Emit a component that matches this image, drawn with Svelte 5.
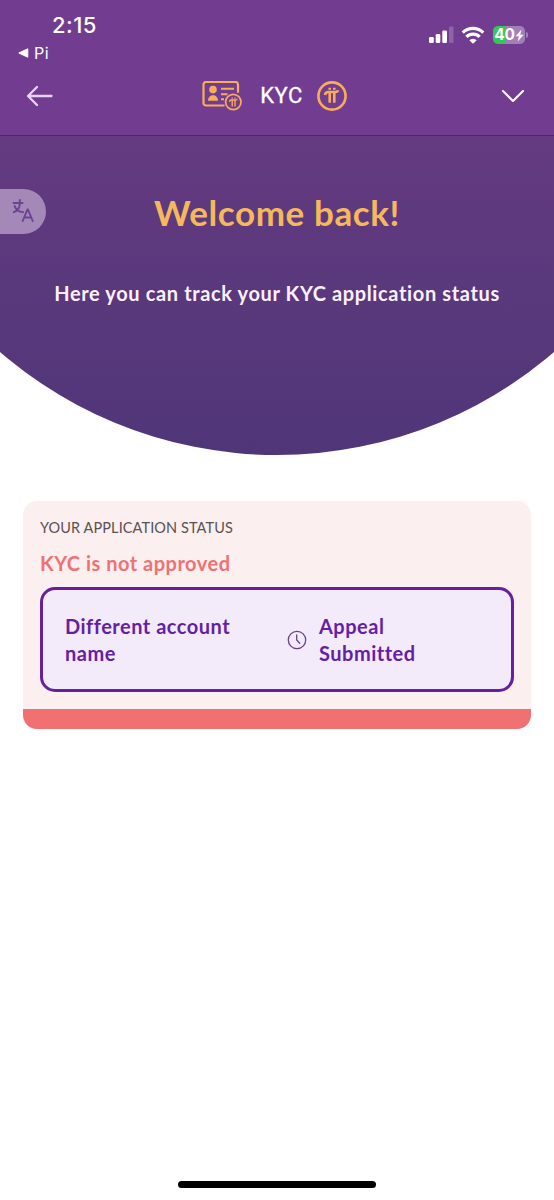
<script lang="ts">
	let title = 'KYC';
	let status = 'KYC is not approved';
	let steps = [{ reason: 'Different account name', state: 'Appeal Submitted' }];
</script>

{#snippet piMark()}
	<path d="M8 14c.3-2 1.300-3 3.300-3h7.200c1.400 0 2.200-.6 2.500-1.800M12.700 11v10.700M17.300 11v10.700" />
	<path d="M12.700 6.800v2M17.300 6.800v2" />
{/snippet}

<div class="screen">
	<header>
		<div class="status-bar">
			<div class="status-left">
				<div class="time">2:15</div>
				<div class="back-app">
					<svg width="11" height="10" viewBox="0 0 11 10"><path d="M.8 5 9.800.800v8.400z" fill="#fff" stroke="#fff" stroke-linejoin="round" /></svg>
					<span>Pi</span>
				</div>
			</div>
			<div class="status-right">
				<svg width="25" height="17" viewBox="0 0 25 17" fill="#fff">
					<rect x="0" y="11" width="4.800" height="6" rx="1.300" />
					<rect x="6.700" y="8" width="4.600" height="9" rx="1.300" />
					<rect x="13.300" y="4.500" width="4.700" height="12.500" rx="1.300" />
					<rect x="20" y="0.500" width="4.500" height="16.500" rx="1.300" opacity=".2" />
				</svg>
				<svg class="wifi" width="24" height="18" viewBox="0 0 24 18">
					<g fill="none" stroke="#fff" stroke-width="3.300">
						<path d="M1.700 6.600a14.700 14.700 0 0 1 20.600 0" />
						<path d="M5.400 10.900a9.300 9.300 0 0 1 13.200 0" />
					</g>
					<path d="M8.300 14.300a5.300 5.300 0 0 1 7.400 0L12 17.800z" fill="#fff" />
				</svg>
				<div class="battery">
					<span>40</span>
					<svg width="9" height="13" viewBox="0 0 9 13"><path d="M6.500.5.500 7.300h3.300L2.700 12.500 8.600 5.700H5.200z" fill="#fff" /></svg>
				</div>
			</div>
		</div>
		<nav>
			<button aria-label="Back">
				<svg width="28" height="22" viewBox="0 0 28 22" fill="none" stroke="#ead2f5" stroke-width="2.300" stroke-linecap="round" stroke-linejoin="round">
					<path d="M11 2 2 11l9 9M2.500 11H25.500" />
				</svg>
			</button>
			<div class="brand">
				<svg width="40" height="30" viewBox="0 0 40 30" fill="none" stroke="#f8ad59" stroke-width="2.200">
					<path d="M22.500 24.500H4A2.500 2.500 0 0 1 1.500 22V3.500A2.500 2.500 0 0 1 4 1h29.500A2.500 2.500 0 0 1 36 3.500v8.300" />
					<circle cx="11" cy="8.600" r="3.800" fill="#f8ad59" stroke="none" />
					<path d="M6 19.800c0-7.500 10-7.500 10 0z" fill="#f8ad59" stroke="none" />
					<path d="M19 7.800h13M19 13.300h6.500M19 18.300h3" stroke-width="2" />
					<circle cx="31.300" cy="21" r="7.700" stroke-width="1.700" />
					<g transform="translate(22.600 12.400) scale(.6)" stroke-width="2.300">{@render piMark()}</g>
				</svg>
				<h1>{title}</h1>
				<svg width="30" height="30" viewBox="0 0 30 30" fill="none" stroke="#f8ad59" stroke-width="2.600">
					<circle cx="15" cy="15" r="13.600" />
					{@render piMark()}
				</svg>
			</div>
			<button aria-label="Menu">
				<svg width="24" height="14" viewBox="0 0 24 14" fill="none" stroke="#fff" stroke-width="2.100" stroke-linecap="round" stroke-linejoin="round">
					<path d="M2 2l10 10L22 2" />
				</svg>
			</button>
		</nav>
	</header>

	<section class="hero">
		<h2>Welcome back!</h2>
		<p>Here you can track your KYC application status</p>
		<button class="translate" aria-label="Translate">
			<svg width="22" height="24" viewBox="0 0 22 24" fill="none" stroke="#6c4293" stroke-width="1.900" stroke-linecap="round" stroke-linejoin="round">
				<path d="M1.500 4H10.500M7.800 1v3.300c0 4.500-2.300 7.600-6 8.900M2.600 7c1.200 3.600 4.200 5.800 8.500 6.100" />
				<path d="M10.700 22l4.700-11.500h.6L20.700 22M12.500 18.500h6.400" />
			</svg>
		</button>
	</section>

	<main>
		<div class="card">
			<div class="label">Your application status</div>
			<div class="status">{status}</div>
			{#each steps as step}
				<div class="step">
					<div class="reason">{step.reason}</div>
					<svg width="20" height="20" viewBox="0 0 20 20" fill="none" stroke="#6b4087" stroke-width="1.300" stroke-linecap="round">
						<circle cx="10" cy="10" r="8.700" />
						<path d="M9.700 5v5l3 3.200" />
					</svg>
					<div class="state">{step.state}</div>
				</div>
			{/each}
		</div>
	</main>

	<div class="home-indicator"></div>
</div>

<style>
	:global(body) {
		background: #fff;
	}

	.screen {
		width: 554px;
		height: 1200px;
		display: flex;
		flex-direction: column;
		overflow: hidden;
		background: #fff;
		font-family: Lato, 'Open Sans', sans-serif;
	}

	button {
		display: flex;
		padding: 0;
		border: 0;
		background: none;
	}

	svg {
		display: block;
		flex-shrink: 0;
	}

	h1, h2, p {
		margin: 0;
	}

	header {
		box-sizing: border-box;
		height: 136px;
		border-bottom: 1px solid #4e2768;
		background: #723d91;
		color: #fff;
		font-family: Inter, Roboto, sans-serif;
	}

	.status-bar {
		height: 68px;
		display: flex;
		justify-content: space-between;
	}

	.time {
		padding: 12px 0 0 52px;
		font-size: 22px;
		font-weight: 500;
		line-height: 27px;
		letter-spacing: 0.5px;
	}

	.back-app {
		display: flex;
		align-items: center;
		gap: 5px;
		padding: 4px 0 0 18px;
		font-size: 16px;
		line-height: 20px;
		letter-spacing: 0.5px;
	}

	.status-right {
		display: flex;
		align-items: flex-start;
		padding: 26px 29px 0 0;
	}

	.wifi {
		margin: 0 8px 0 7px;
	}

	.battery {
		position: relative;
		box-sizing: border-box;
		width: 32px;
		height: 18px;
		display: flex;
		align-items: center;
		justify-content: center;
		border-radius: 5px;
		background: linear-gradient(to right, #34c759 42%, #a27fb8 42%);
		font-size: 15.5px;
		font-weight: 700;
		line-height: 18px;
		letter-spacing: -0.3px;
	}

	.battery::after {
		content: '';
		position: absolute;
		right: -3px;
		top: 6px;
		width: 2px;
		height: 6px;
		border-radius: 0 2px 2px 0;
		background: #a27fb8;
	}

	nav {
		height: 55px;
		display: flex;
		align-items: center;
		justify-content: space-between;
		padding: 0 29px 0 26px;
	}

	.brand {
		display: flex;
		align-items: center;
		margin-right: 6px;
	}

	h1 {
		margin: 0 14px 0 18px;
		font: 400 22px/30px Roboto, sans-serif;
		letter-spacing: 0.5px;
		-webkit-text-stroke: 0.3px #fff;
	}

	.hero {
		position: relative;
		height: 319px;
		flex-shrink: 0;
		background: linear-gradient(#643a80, #4f3678);
		clip-path: circle(424px at 50% -105px);
		text-align: center;
		white-space: nowrap;
	}

	h2 {
		padding-top: 54px;
		color: #f5b85b;
		font-size: 35px;
		font-weight: 700;
		line-height: 44px;
		letter-spacing: 0.6px;
	}

	.hero p {
		padding-top: 46px;
		color: #fbf0ff;
		font-size: 20px;
		font-weight: 700;
		line-height: 26px;
		letter-spacing: 0.63px;
	}

	/* language tab stuck to the left edge */
	.translate {
		position: absolute;
		left: 0;
		top: 53px;
		width: 46px;
		height: 45px;
		align-items: center;
		padding-left: 12px;
		padding-bottom: 2px;
		border-radius: 0 23px 23px 0;
		background: #a388b8;
	}

	main {
		flex: 1;
		padding: 46px 23px 0;
	}

	.card {
		box-sizing: border-box;
		height: 228px;
		padding: 17px 17px 0;
		border-radius: 14px;
		background: linear-gradient(#fcefef 208px, #f17172 208px);
	}

	.label {
		color: #5b5053;
		font-size: 14.5px;
		line-height: 20px;
		letter-spacing: 0.1px;
		text-transform: uppercase;
	}

	.status {
		padding: 12px 0 10px;
		color: #f07173;
		font-size: 20px;
		font-weight: 700;
		line-height: 27px;
		letter-spacing: 0.5px;
	}

	.step {
		box-sizing: border-box;
		height: 105px;
		display: flex;
		align-items: center;
		padding: 0 22px;
		border: 3px solid #651fa0;
		border-radius: 15px;
		background: #f3eafa;
		color: #651fa5;
		font-size: 20px;
		font-weight: 700;
		line-height: 27px;
		letter-spacing: 0.5px;
	}

	.reason {
		width: 180px;
		margin-right: 42px;
	}

	.state {
		width: 110px;
		margin-left: 12px;
	}

	.home-indicator {
		width: 198px;
		height: 7px;
		margin: 0 auto 12px;
		border-radius: 4px;
		background: #000;
	}
</style>
